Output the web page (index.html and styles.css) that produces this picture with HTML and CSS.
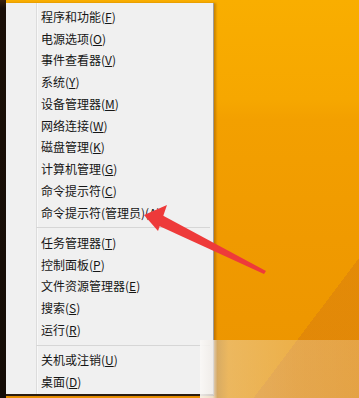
FILE: index.html
```html
<!DOCTYPE html>
<html lang="zh-CN">
<head>
<meta charset="utf-8">
<link rel="stylesheet" href="styles.css">
</head>
<body>
<div class="screen">
  <div class="edge"></div>
  <div class="menu">
    <div class="row"><span class="label">程序和功能(<u>F</u>)</span></div>
    <div class="row"><span class="label">电源选项(<u>O</u>)</span></div>
    <div class="row"><span class="label">事件查看器(<u>V</u>)</span></div>
    <div class="row"><span class="label">系统(<u>Y</u>)</span></div>
    <div class="row"><span class="label">设备管理器(<u>M</u>)</span></div>
    <div class="row"><span class="label">网络连接(<u>W</u>)</span></div>
    <div class="row"><span class="label">磁盘管理(<u>K</u>)</span></div>
    <div class="row"><span class="label">计算机管理(<u>G</u>)</span></div>
    <div class="row"><span class="label">命令提示符(<u>C</u>)</span></div>
    <div class="row"><span class="label">命令提示符(管理员)(<u>A</u>)</span></div>
    <div class="sep"><span class="line"></span></div>
    <div class="row"><span class="label">任务管理器(<u>T</u>)</span></div>
    <div class="row"><span class="label">控制面板(<u>P</u>)</span></div>
    <div class="row"><span class="label">文件资源管理器(<u>E</u>)</span></div>
    <div class="row"><span class="label">搜索(<u>S</u>)</span></div>
    <div class="row"><span class="label">运行(<u>R</u>)</span></div>
    <div class="sep"><span class="line"></span></div>
    <div class="row"><span class="label">关机或注销(<u>U</u>)</span></div>
    <div class="row"><span class="label">桌面(<u>D</u>)</span></div>
  </div>
  <div class="desktop"></div>
  <svg class="arrow" width="359" height="398" viewBox="0 0 359 398">
    <polygon points="144,215 167,205 158,231" fill="#ee3a3a"/>
    <polygon points="160,214 266,271 264,274 157,225" fill="#ee3a3a"/>
  </svg>
  <div class="watermark"></div>
</div>
</body>
</html>
```

FILE: styles.css
```css
html, body {
  margin: 0;
  padding: 0;
}
body {
  width: 359px;
  height: 398px;
  overflow: hidden;
}
.screen {
  position: relative;
  width: 359px;
  height: 398px;
  display: flex;
  background:
    linear-gradient(127deg, rgba(0,0,0,0) 0, rgba(0,0,0,0) 84%, rgba(200,105,25,0.3) 84%),
    linear-gradient(180deg, #f9ae00 0%, #f6a700 25%, #f3a000 30%, #f09a00 60%, #ec9400 100%);
  font-family: "Noto Sans CJK SC", "Noto Sans", sans-serif;
}
.edge {
  width: 6px;
  flex: none;
  background: linear-gradient(180deg, #3a220e 0, #1a0f07 2%, #140c06 100%);
}
.menu {
  width: 208px;
  flex: none;
  margin: 3px 0 0 0;
  height: 393px;
  box-sizing: border-box;
  padding: 3px 0 3px 0;
  background:
    linear-gradient(90deg, transparent 30px, #dcdcdc 30px, #dcdcdc 31px, #f8f8f8 31px, #f8f8f8 32px, transparent 32px),
    #f0f0f0;
  border-right: 1px solid #9c9c9c;
  border-bottom: 2px solid #2a1c10;
  box-shadow: 2px 0 2px rgba(120, 60, 0, 0.35);
  display: flex;
  flex-direction: column;
}
.row {
  height: 21.75px;
  display: flex;
  align-items: center;
  padding-left: 35px;
  flex: none;
}
.label {
  font-size: 12px;
  line-height: 14px;
  color: #161616;
  white-space: nowrap;
}
.label u {
  text-decoration-thickness: 1px;
  text-underline-offset: 1px;
}
.sep {
  height: 8.5px;
  flex: none;
  display: flex;
  align-items: center;
  padding-left: 30px;
}
.line {
  flex: 1;
  height: 1px;
  background: #d6d6d6;
  margin-right: 3px;
}
.desktop {
  flex: 1;
}
.arrow {
  position: absolute;
  left: 0;
  top: 0;
}
.watermark {
  position: absolute;
  left: 200px;
  top: 340px;
  width: 159px;
  height: 58px;
  background: linear-gradient(90deg, rgba(250,248,246,0.92) 0, rgba(240,236,232,0.85) 8%, rgba(200,190,180,0.55) 11%, rgba(235,225,210,0.45) 18%, rgba(235,225,210,0.35) 60%, rgba(235,225,210,0.3) 100%);
}
```
